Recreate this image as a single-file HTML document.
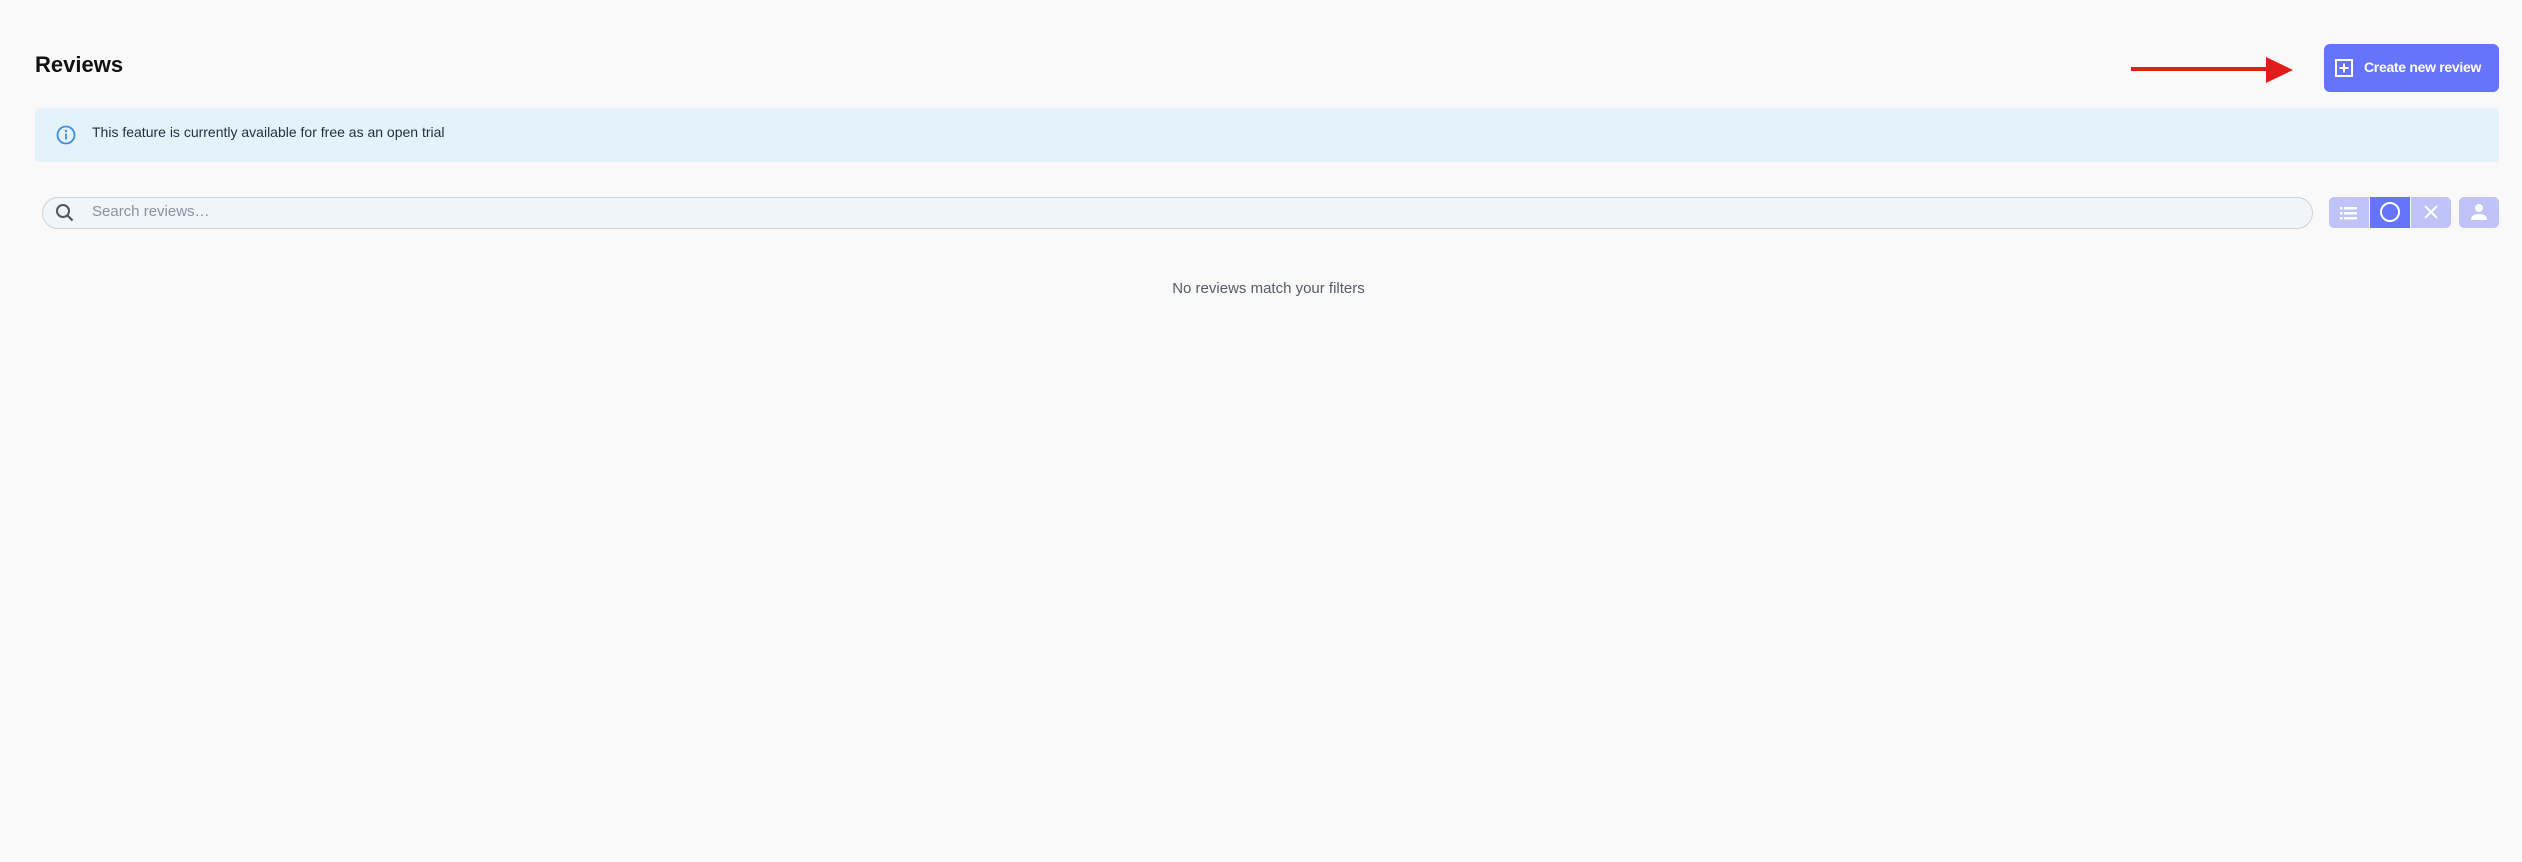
<!DOCTYPE html><html><head><style>
body{margin:0;width:2522px;height:862px;background:#f9f9f9;font-family:"Liberation Sans",sans-serif;position:relative;overflow:hidden}
.a{position:absolute}
</style></head><body>
<div class="a" style="left:35px;top:52px;font-size:22px;font-weight:bold;color:#111">Reviews</div>
<div class="a" style="left:2131px;top:67px;width:140px;height:4px;background:#e21b1b"></div>
<svg class="a" style="left:2266px;top:57px" width="28" height="26"><polygon points="0,0 27,13 0,26" fill="#e21b1b"/></svg>
<div class="a" style="left:2324px;top:44px;width:175px;height:48px;background:#6673fb;border-radius:6px;color:#fff;font-weight:bold;font-size:14px">
<svg class="a" style="left:11px;top:15px" width="19" height="19"><rect x="1" y="1" width="16" height="16" fill="none" stroke="#fff" stroke-width="2"/><path d="M9 4.5v9M4.5 9h9" stroke="#fff" stroke-width="2"/></svg>
<span class="a" style="left:40px;top:15px;white-space:nowrap;letter-spacing:-0.3px">Create new review</span></div>
<div class="a" style="left:35px;top:108px;width:2464px;height:54px;background:#e4f2fc;border-radius:4px"></div>
<svg class="a" style="left:55px;top:124px" width="22" height="22"><circle cx="11" cy="11" r="8.5" fill="none" stroke="#3b8fe0" stroke-width="1.8"/><circle cx="11" cy="7" r="1.2" fill="#3b8fe0"/><path d="M11 9.5v6" stroke="#3b8fe0" stroke-width="1.8"/></svg>
<div class="a" style="left:92px;top:124px;font-size:14px;color:#1f2f3f">This feature is currently available for free as an open trial</div>
<div class="a" style="left:42px;top:197px;width:2269px;height:30px;background:#f0f5fa;border:1px solid #d0d3d6;border-radius:16px"></div>
<svg class="a" style="left:54px;top:202px" width="22" height="22"><circle cx="9" cy="9" r="6" fill="none" stroke="#555" stroke-width="2"/><path d="M13.5 13.5l5 5" stroke="#555" stroke-width="2.2"/></svg>
<div class="a" style="left:92px;top:203px;font-size:15px;color:#8a929b">Search reviews…</div>
<div class="a" style="left:2329px;top:197px;width:40px;height:31px;background:#bfc3f7;border-radius:5px 0 0 5px"></div>
<svg class="a" style="left:2339px;top:203px" width="20" height="20"><g fill="#fff"><rect x="1" y="4" width="2.5" height="2.5"/><rect x="1" y="9" width="2.5" height="2.5"/><rect x="1" y="14" width="2.5" height="2.5"/><rect x="5" y="4" width="13" height="2.5"/><rect x="5" y="9" width="13" height="2.5"/><rect x="5" y="14" width="13" height="2.5"/></g></svg>
<div class="a" style="left:2370px;top:197px;width:40px;height:31px;background:#6673fb"></div>
<svg class="a" style="left:2378px;top:200px" width="24" height="24"><circle cx="12" cy="12" r="9" fill="none" stroke="#fff" stroke-width="2"/></svg>
<div class="a" style="left:2411px;top:197px;width:40px;height:31px;background:#bfc3f7;border-radius:0 5px 5px 0"></div>
<svg class="a" style="left:2421px;top:202px" width="20" height="20"><path d="M4 4l12 12M16 4L4 16" stroke="#fff" stroke-width="2"/></svg>
<div class="a" style="left:2459px;top:197px;width:40px;height:31px;background:#bfc3f7;border-radius:5px"></div>
<svg class="a" style="left:2469px;top:202px" width="20" height="20"><circle cx="10" cy="6" r="4" fill="#fff"/><path d="M2 18c0-5 4-6 8-6s8 1 8 6z" fill="#fff"/></svg>
<div class="a" style="left:0;width:2537px;text-align:center;top:280px;font-size:15px;color:#555c66">No reviews match your filters</div>
</body></html>
